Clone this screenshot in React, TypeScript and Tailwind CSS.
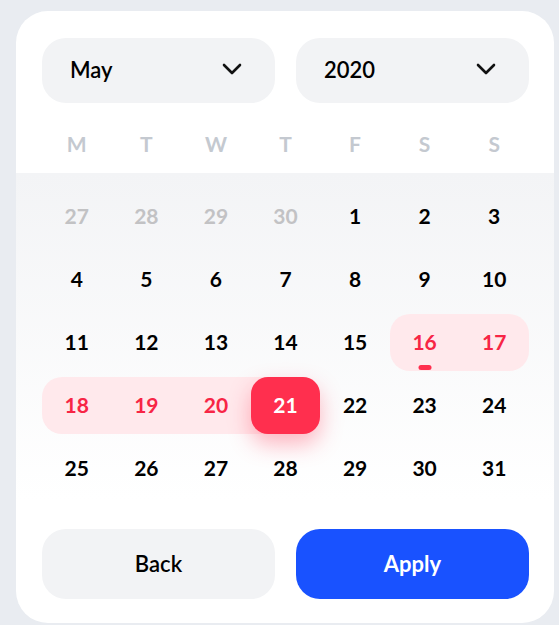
import React from "react";

type Day = { n: number; kind: "muted" | "normal" | "range" | "selected"; cls?: string; dot?: boolean; halfBg?: boolean };

const Chevron = () => (
  <svg width="22" height="14" viewBox="0 0 22 14" fill="none">
    <path d="M3 3 L11 11 L19 3" stroke="#111" strokeWidth="2.6" strokeLinecap="round" strokeLinejoin="round" />
  </svg>
);

const Select = ({ label }: { label: string }) => (
  <button className="flex h-[65px] flex-1 items-center justify-between rounded-[24px] bg-[#f2f3f5] pb-[3px] pl-[28px] pr-[32px] text-[22px] font-semibold text-black">
    <span>{label}</span>
    <Chevron />
  </button>
);

const weekdays = ["M", "T", "W", "T", "F", "S", "S"];

const days: Day[] = [
  ...[27, 28, 29, 30].map((n) => ({ n, kind: "muted" as const })),
  ...Array.from({ length: 31 }, (_, i) => i + 1).map((n): Day => {
    if (n === 16) return { n, kind: "range", cls: "rounded-l-[20px]", dot: true };
    if (n === 17) return { n, kind: "range", cls: "rounded-r-[20px]" };
    if (n === 18) return { n, kind: "range", cls: "rounded-l-[20px]" };
    if (n === 19 || n === 20) return { n, kind: "range" };
    if (n === 21) return { n, kind: "selected", halfBg: true };
    return { n, kind: "normal" };
  }),
];

const DayCell = ({ d }: { d: Day }) => {
  return (
    <div className="relative flex h-[63px] items-center">
      {d.halfBg && <div className="absolute left-0 top-[3px] h-[57px] w-1/2 bg-[#ffe9ec]" />}
      <div
        className={
          "relative flex h-[57px] w-full items-center justify-center pb-[2px] text-[21px] font-bold " +
          (d.kind === "muted"
            ? "text-[#c2c2c4]"
            : d.kind === "normal"
            ? "text-black"
            : d.kind === "range"
            ? "bg-[#ffe9ec] text-[#f72545]"
            : "rounded-[17px] bg-[#ff2f4e] text-white shadow-[0_10px_22px_rgba(255,47,78,0.35)]") +
          " " +
          (d.cls ?? "")
        }
      >
        {d.n}
        {d.dot && <span className="absolute bottom-[1px] left-1/2 h-[5px] w-[13px] -translate-x-1/2 rounded-full bg-[#ff2f4e]" />}
      </div>
    </div>
  );
};

export default function App() {
  return (
    <div className="min-h-[625px] bg-[#e9ecf1] pl-[16px] pt-[11px] font-['Lato',sans-serif]">
      <div className="w-[538px] overflow-hidden rounded-[32px] bg-white pb-[24px] pt-[27px]">
        <div className="flex gap-[21px] pl-[26px] pr-[25px]">
          <Select label="May" />
          <Select label="2020" />
        </div>

        <div className="grid h-[70px] grid-cols-7 items-center pl-[26px] pr-[25px] pt-[12px]">
          {weekdays.map((w, i) => (
            <div key={i} className="text-center text-[21px] font-bold text-[#c4c9d0]">
              {w}
            </div>
          ))}
        </div>

        <div className="bg-gradient-to-b from-[#f3f4f6] to-white pl-[26px] pr-[25px] pt-[12px]">
          <div className="grid grid-cols-7">
            {days.map((d, i) => (
              <DayCell key={i} d={d} />
            ))}
          </div>
        </div>

        <div className="mt-[29px] flex gap-[21px] pl-[26px] pr-[25px]">
          <button className="h-[70px] flex-1 rounded-[24px] bg-[#f2f3f5] pb-[2px] text-[22px] font-semibold text-black">
            Back
          </button>
          <button className="h-[70px] flex-1 rounded-[24px] bg-[#1952ff] pb-[2px] text-[22px] font-bold text-white">
            Apply
          </button>
        </div>
      </div>
    </div>
  );
}
